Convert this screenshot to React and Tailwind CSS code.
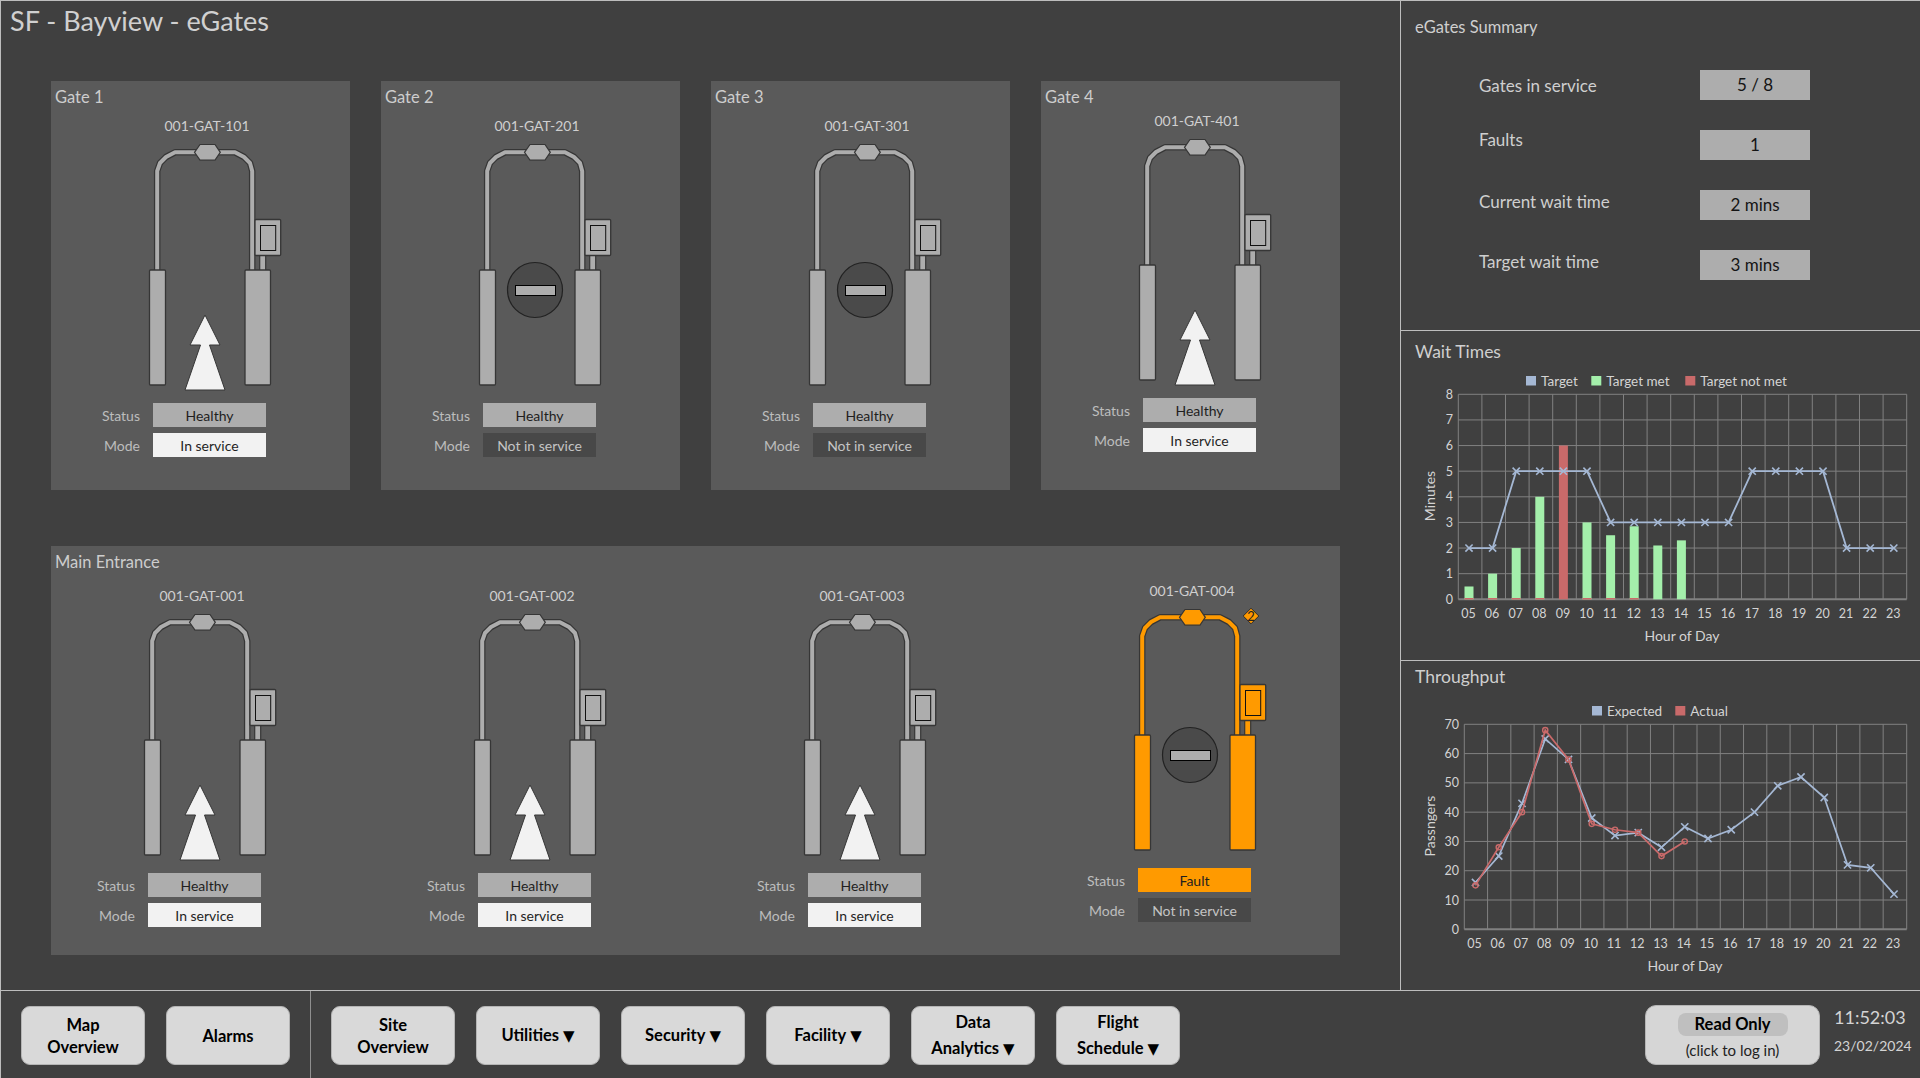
import React from 'react';

const hours = ['05', '06', '07', '08', '09', '10', '11', '12', '13', '14', '15', '16', '17', '18', '19', '20', '21', '22', '23'];

const waitTarget = [2, 2, 5, 5, 5, 5, 3, 3, 3, 3, 3, 3, 5, 5, 5, 5, 2, 2, 2];
const waitActual = [0.5, 1, 2, 4, 6, 3, 2.5, 2.85, 2.1, 2.3];

const expected = [16, 25, 43, 65, 58, 38, 32, 33, 28, 35, 31, 34, 40, 49, 52, 45, 22, 21, 12];
const actual = [15, 28, 40, 68, 58, 36, 34, 33, 25, 30];

const LINE_BLUE = '#a5b8d4';
const RED = '#c96a6a';
const GREEN = '#a4efab';
const GRID = '#808080';
const TEXT = '#d4d4d4';

function GateDrawing({ fault, open }) {
  const fill = fault ? '#ff9a00' : '#adadad';
  const edge = '#363636';
  const arch = 'M27.2 142 V41 L30 33 L36 27 L45 22.3 H105 L114 27 L120 33 L122.2 41 V142';
  return (
    <svg width="170" height="270" viewBox="0 1 170 270" className="block shrink-0">
      <path d={arch} fill="none" stroke={edge} strokeWidth="6.5" strokeLinejoin="round" />
      <path d={arch} fill="none" stroke={fill} strokeWidth="4" strokeLinejoin="round" />
      <rect x="129.7" y="124" width="6" height="17" fill={fill} stroke={edge} strokeWidth="1.2" />
      <rect x="125" y="89.5" width="25.7" height="36" rx="1" fill={fill} stroke={edge} strokeWidth="1.3" />
      <rect x="130.5" y="95.5" width="15.2" height="25" fill={fill} stroke="#111" strokeWidth="1" />
      <rect x="19.5" y="140" width="16" height="115" rx="1" fill={fill} stroke={edge} strokeWidth="1.3" />
      <rect x="115" y="140" width="25.5" height="115" rx="1" fill={fill} stroke={edge} strokeWidth="1.3" />
      <polygon points="64.5,22.3 70,14.5 85,14.5 90.3,22.3 85,30.2 70,30.2" fill={fill} stroke={edge} strokeWidth="1.2" />
      {open ? (
        <polygon
          points="75,185 90,215 79.5,215 95,260 55,260 70.5,215 60,215"
          fill="#f2f2f2"
          stroke="#363636"
          strokeWidth="1"
          strokeLinejoin="round"
        />
      ) : (
        <g>
          <circle cx="75" cy="160" r="27.5" fill="#4a4a4a" stroke="#222" strokeWidth="1.2" />
          <rect x="55.5" y="155.5" width="40" height="10" fill="#adadad" stroke="#000" strokeWidth="1" />
        </g>
      )}
      {fault && (
        <g>
          <polygon points="136,13.2 143.8,21 136,28.8 128.2,21" fill={fill} stroke="#2b2b2b" strokeWidth="1" />
          <text x="136" y="25.5" textAnchor="middle" fontSize="13" fill="#222">2</text>
        </g>
      )}
    </svg>
  );
}

function Gate({ id, status = 'Healthy', inService, className = '' }) {
  const fault = status === 'Fault';
  return (
    <div className={`flex w-[242px] flex-col ${className}`}>
      <div className="flex h-[12px] items-center justify-center text-[14px] text-[#cfcfcf]">{id}</div>
      <div className="ml-[44px]">
        <GateDrawing fault={fault} open={inService} />
      </div>
      <div className="mt-[2px] flex flex-col gap-[6px] text-[14px]">
        <div className="flex items-center gap-[13px]">
          <span className="w-[54px] text-right text-[#bdbdbd]">Status</span>
          <span className={`flex h-[24px] w-[113px] items-center justify-center text-[#1f1f1f] ${fault ? 'bg-[#ff9a00]' : 'bg-[#adadad]'}`}>
            {status}
          </span>
        </div>
        <div className="flex items-center gap-[13px]">
          <span className="w-[54px] text-right text-[#bdbdbd]">Mode</span>
          {inService ? (
            <span className="flex h-[24px] w-[113px] items-center justify-center bg-[#f2f2f2] text-[#1f1f1f]">In service</span>
          ) : (
            <span className="flex h-[24px] w-[113px] items-center justify-center bg-[#484848] text-[#c4c4c4]">Not in service</span>
          )}
        </div>
      </div>
    </div>
  );
}

function GatePanel({ title, children, className = '' }) {
  return (
    <div className={`h-[409px] bg-[#5a5a5a] ${className}`}>
      <div className="h-[38px] pl-[4px] pt-[5px] text-[16.5px] leading-[22px] text-[#cdcdcd]">{title}</div>
      {children}
    </div>
  );
}

function SummaryRow({ label, value, labelClass }) {
  return (
    <div className="flex h-[30px] items-center">
      <span className={`w-[221px] text-[17px] text-[#cfcfcf] ${labelClass}`}>{label}</span>
      <span className="flex h-[30px] w-[110px] items-center justify-center bg-[#adadad] text-[17px] text-[#141414]">{value}</span>
    </div>
  );
}

function Cross({ x, y, color }) {
  return <path d={`M${x - 3.6} ${y - 3.6} L${x + 3.6} ${y + 3.6} M${x - 3.6} ${y + 3.6} L${x + 3.6} ${y - 3.6}`} stroke={color} strokeWidth="1.6" fill="none" />;
}

function LegendItem({ x, color, label }) {
  return (
    <g>
      <rect x={x} y="46" width="10" height="9.5" fill={color} />
      <text x={x + 15} y="55.5" fontSize="13.5" fill={TEXT}>{label}</text>
    </g>
  );
}

function Grid({ left, stepX, steps, labelX }) {
  const top = 64.3;
  const bottom = 269.3;
  const right = 506.7;
  const stepY = (bottom - top) / steps;
  return (
    <g>
      {hours.map((_, i) => (
        <line key={i} x1={left + i * stepX} x2={left + i * stepX} y1={top} y2={bottom} stroke={GRID} strokeWidth="1" />
      ))}
      <line x1={right} x2={right} y1={top} y2={bottom} stroke={GRID} strokeWidth="1" />
      {Array.from({ length: steps + 1 }).map((_, i) => (
        <line key={i} x1={left} x2={right} y1={top + i * stepY} y2={top + i * stepY} stroke={GRID} strokeWidth={i === steps ? 2 : 1} />
      ))}
      {labelX}
    </g>
  );
}

function WaitChart() {
  const cx = (i) => 69 + i * 23.6;
  const vy = (v) => 269.3 - v * 25.625;
  const pts = waitTarget.map((v, i) => `${cx(i)},${vy(v)}`).join(' ');
  return (
    <svg width="519" height="284" viewBox="1 45 519 284" className="block">
      <LegendItem x={126} color={LINE_BLUE} label="Target" />
      <LegendItem x={191.3} color={GREEN} label="Target met" />
      <LegendItem x={285.3} color={RED} label="Target not met" />
      <Grid left={58.3} stepX={23.6} steps={8} />
      {[0, 1, 2, 3, 4, 5, 6, 7, 8].map((v) => (
        <text key={v} x="53" y={vy(v) + 4.5} textAnchor="end" fontSize="12.5" fill={TEXT}>{v}</text>
      ))}
      {hours.map((h, i) => (
        <text key={h} x={cx(i) - 0.5} y="288" textAnchor="middle" fontSize="12.5" fill={TEXT}>{h}</text>
      ))}
      {waitActual.map((v, i) =>
        i === 4 ? (
          <rect key={i} x={cx(i) - 4.5} y={vy(v)} width="9" height={v * 25.625} fill={RED} />
        ) : (
          <g key={i}>
            <rect x={cx(i) - 4.5} y={vy(v)} width="9" height={v * 25.625} fill={GREEN} />
            {i < 8 && <rect x={cx(i) - 4.5} y="268" width="9" height="1.5" fill={RED} />}
          </g>
        )
      )}
      <polyline points={pts} fill="none" stroke={LINE_BLUE} strokeWidth="1.8" />
      {waitTarget.map((v, i) => (
        <Cross key={i} x={cx(i)} y={vy(v)} color={LINE_BLUE} />
      ))}
      <text x="282" y="311" textAnchor="middle" fontSize="14" fill={TEXT}>Hour of Day</text>
      <text transform="translate(34.5 166) rotate(-90)" textAnchor="middle" fontSize="14" fill={TEXT}>Minutes</text>
    </svg>
  );
}

function ThroughputChart() {
  const cx = (i) => 75.5 + i * 23.25;
  const vy = (v) => 269.3 - (v * 205) / 70;
  const line = (arr) => arr.map((v, i) => `${cx(i)},${vy(v)}`).join(' ');
  return (
    <svg width="519" height="284" viewBox="1 45 519 284" className="block">
      <LegendItem x={192} color={LINE_BLUE} label="Expected" />
      <LegendItem x={275.3} color={RED} label="Actual" />
      <Grid left={64.3} stepX={23.27} steps={7} />
      {[0, 10, 20, 30, 40, 50, 60, 70].map((v) => (
        <text key={v} x="59" y={vy(v) + 4.5} textAnchor="end" fontSize="12.5" fill={TEXT}>{v}</text>
      ))}
      {hours.map((h, i) => (
        <text key={h} x={cx(i) - 1} y="288" textAnchor="middle" fontSize="12.5" fill={TEXT}>{h}</text>
      ))}
      <polyline points={line(expected)} fill="none" stroke={LINE_BLUE} strokeWidth="1.7" />
      {expected.map((v, i) => (
        <Cross key={i} x={cx(i)} y={vy(v)} color={LINE_BLUE} />
      ))}
      <polyline points={line(actual)} fill="none" stroke={RED} strokeWidth="1.7" />
      {actual.map((v, i) => (
        <circle key={i} cx={cx(i)} cy={vy(v)} r="2.6" fill="none" stroke={RED} strokeWidth="1.4" />
      ))}
      <text x="285" y="311" textAnchor="middle" fontSize="14" fill={TEXT}>Hour of Day</text>
      <text transform="translate(34.5 166) rotate(-90)" textAnchor="middle" fontSize="14" fill={TEXT}>Passngers</text>
    </svg>
  );
}

function NavButton({ children, tight }) {
  return (
    <button className={`flex h-[59px] w-[124px] flex-col items-center justify-center rounded-[9px] border border-[#b5b5b5] bg-[#d9d9d9] text-[16.5px] font-bold text-black ${tight ? 'leading-[26px]' : 'leading-[22px]'}`}>
      {children}
    </button>
  );
}

function Caret() {
  return <span className="ml-[4px] [font-family:'DejaVu_Sans',sans-serif] text-[15px]">▼</span>;
}

export default function App() {
  return (
    <div className="flex h-[1078px] w-[1920px] flex-col overflow-hidden border-l border-t border-[#bdbdbd] bg-[#404040] [font-family:Lato,'Noto_Sans',sans-serif]">
      <div className="flex h-[990px] shrink-0 border-b border-[#bdbdbd]">
        <div className="w-[1399px] shrink-0">
          <div className="h-[80px] pl-[9px] pt-[2px] text-[27px] leading-[36px] text-[#d0d0d0]">SF - Bayview - eGates</div>
          <div className="ml-[50px] flex gap-[31px]">
            <GatePanel title="Gate 1" className="w-[299px]">
              <Gate id="001-GAT-101" inService className="ml-[35px]" />
            </GatePanel>
            <GatePanel title="Gate 2" className="w-[299px]">
              <Gate id="001-GAT-201" className="ml-[35px]" />
            </GatePanel>
            <GatePanel title="Gate 3" className="w-[299px]">
              <Gate id="001-GAT-301" className="ml-[35px]" />
            </GatePanel>
            <GatePanel title="Gate 4" className="w-[299px]">
              <Gate id="001-GAT-401" inService className="-mt-[5px] ml-[35px]" />
            </GatePanel>
          </div>
          <GatePanel title="Main Entrance" className="ml-[50px] mt-[56px] w-[1289px]">
            <div className="flex items-start gap-[88px] pl-[30px]">
              <Gate id="001-GAT-001" inService className="mt-[5px]" />
              <Gate id="001-GAT-002" inService className="mt-[5px]" />
              <Gate id="001-GAT-003" inService className="mt-[5px]" />
              <Gate id="001-GAT-004" status="Fault" />
            </div>
          </GatePanel>
        </div>

        <div className="flex w-[520px] shrink-0 flex-col border-l border-[#bdbdbd]">
          <section className="h-[330px] shrink-0 border-b border-[#bdbdbd]">
            <div className="h-[69px] pl-[14px] pt-[15px] text-[16.5px] leading-[22px] text-[#cfcfcf]">eGates Summary</div>
            <div className="flex flex-col gap-[30px] pl-[78px]">
              <SummaryRow label="Gates in service" value="5 / 8" labelClass="pt-[2px]" />
              <SummaryRow label="Faults" value="1" labelClass="pb-[10px]" />
              <SummaryRow label="Current wait time" value="2 mins" labelClass="pb-[6px]" />
              <SummaryRow label="Target wait time" value="3 mins" labelClass="pb-[6px]" />
            </div>
          </section>
          <section className="h-[330px] shrink-0 border-b border-[#bdbdbd]">
            <div className="h-[44px] pl-[14px] pt-[10px] text-[17.5px] leading-[22px] text-[#cfcfcf]">Wait Times</div>
            <WaitChart />
          </section>
          <section className="flex-1">
            <div className="h-[44px] pl-[14px] pt-[5px] text-[17.5px] leading-[22px] text-[#cfcfcf]">Throughput</div>
            <ThroughputChart />
          </section>
        </div>
      </div>

      <div className="flex flex-1 items-stretch">
        <div className="flex gap-[21px] border-r border-[#8f8f8f] pl-[20px] pr-[20px] pt-[15px]">
          <NavButton><span>Map</span><span>Overview</span></NavButton>
          <NavButton>Alarms</NavButton>
        </div>
        <div className="flex gap-[21px] pl-[20px] pt-[15px]">
          <NavButton><span>Site</span><span>Overview</span></NavButton>
          <NavButton><span>Utilities<Caret /></span></NavButton>
          <NavButton><span>Security<Caret /></span></NavButton>
          <NavButton><span>Facility<Caret /></span></NavButton>
          <NavButton tight><span>Data</span><span>Analytics<Caret /></span></NavButton>
          <NavButton tight><span>Flight</span><span>Schedule<Caret /></span></NavButton>
        </div>
        <div className="ml-auto flex items-start gap-[14px] pr-[10px] pt-[14px]">
          <div className="flex h-[60px] w-[175px] flex-col items-center rounded-[11px] border border-[#b5b5b5] bg-[#d6d6d6] pt-[7px]">
            <span className="flex h-[23px] w-[110px] items-center justify-center rounded-[8px] bg-[#bfbfbf] text-[16.5px] font-bold text-black">Read Only</span>
            <span className="mt-[3px] text-[15px] leading-[22px] text-[#222]">(click to log in)</span>
          </div>
          <div className="flex w-[76px] flex-col text-[#d4d4d4]">
            <span className="h-[31px] text-[18px] leading-[24px]">11:52:03</span>
            <span className="text-[14px] leading-[20px]">23/02/2024</span>
          </div>
        </div>
      </div>
    </div>
  );
}
